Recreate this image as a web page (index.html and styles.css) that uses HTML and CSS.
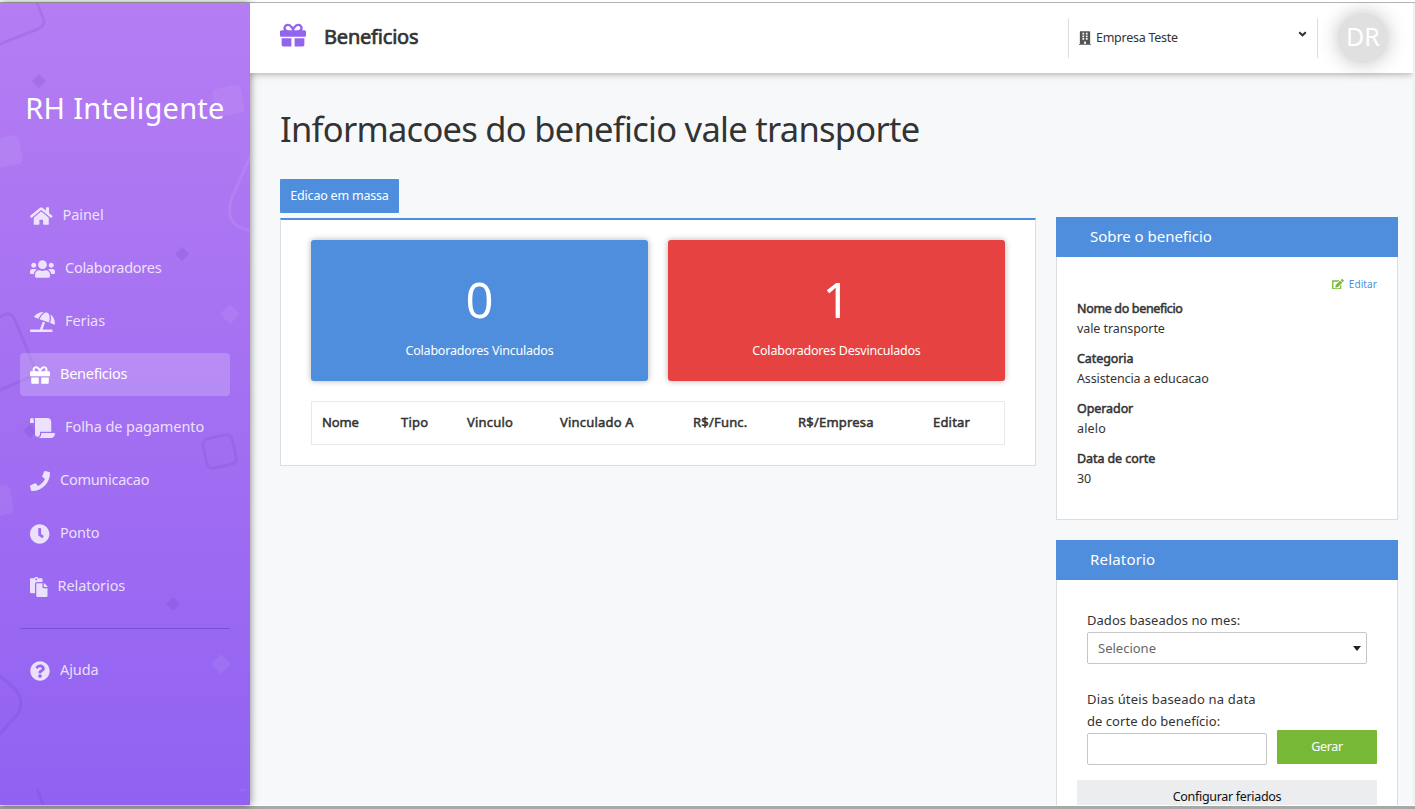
FILE: index.html
```html
<!DOCTYPE html>
<html lang="pt-BR">
<head>
<meta charset="utf-8">
<title>RH Inteligente - Beneficios</title>
<link rel="stylesheet" href="styles.css">
</head>
<body>
<svg class="defs" width="0" height="0" aria-hidden="true">
  <symbol id="gift" viewBox="0 0 512 512"><path d="M32 448c0 17.700 14.300 32 32 32h160V320H32v128zm256 32h160c17.700 0 32-14.300 32-32V320H288v160zm192-320h-42.100c6.200-12.100 10.100-25.500 10.100-40 0-48.500-39.500-88-88-88-41.600 0-68.500 21.300-103 68.300-34.500-47-61.400-68.300-103-68.300-48.500 0-88 39.500-88 88 0 14.500 3.800 27.900 10.100 40H32c-17.700 0-32 14.300-32 32v80c0 8.800 7.200 16 16 16h480c8.800 0 16-7.200 16-16v-80c0-17.700-14.300-32-32-32zm-326.100 0c-22.100 0-40-17.900-40-40s17.900-40 40-40c19.900 0 34.600 3.300 86.100 80h-86.100zm206.100 0h-86.100c51.400-76.500 65.700-80 86.100-80 22.100 0 40 17.900 40 40s-17.900 40-40 40z"/></symbol>
</svg>
<div class="frame">
  <aside class="sidebar">
    <svg class="pattern" width="250" height="802" viewBox="0 3 250 802" fill="none" aria-hidden="true">
      <g class="dark-line" stroke-width="3">
        <path d="M37 3L43.500 19Q45.500 26 38 29L-2 45"/>
        <path d="M-2 318L5 314.500Q11 312 14.500 319L33 364Q36 374 28 378L-2 391"/>
        <rect x="204.500" y="436.500" width="30" height="30" rx="6" transform="rotate(-12 219.500 451.500)"/>
        <path d="M-2 674L15 689Q25 701 18 714L-2 736"/>
        <path d="M37 789L43.500 806"/>
      </g>
      <path class="light-line" stroke-width="3" d="M253 150L231 200Q225 222 242 228L253 232"/>
      <g class="dark-fill">
        <path d="M39 74l7 7-7 7-7-7zM182 247l7 7-7 7-7-7zM30 424l7 7-7 7-7-7zM173 597l7 7-7 7-7-7z"/>
      </g>
      <g class="light-fill">
        <rect x="214" y="87" width="29" height="28" rx="5" transform="rotate(-11 228 101)"/>
        <rect x="-8" y="137" width="29" height="29" rx="5" transform="rotate(-11 6 151)"/>
        <rect x="-17" y="487" width="29" height="29" rx="5" transform="rotate(-11 -3 501)"/>
        <path d="M230 304l10 10-10 10-10-10zM221 654l10 10-10 10-10-10zM239 3h7l-3.500 3.500zM239 789h7l-3.500 3.500z"/>
      </g>
    </svg>
    <div class="brand">RH Inteligente</div>
    <nav class="nav">
      <a class="nav-item"><svg width="22.500" height="20" viewBox="0 0 576 512"><path d="M280.370 148.260L96 300.110V464a16 16 0 0 0 16 16l112.060-.29a16 16 0 0 0 15.920-16V368a16 16 0 0 1 16-16h64a16 16 0 0 1 16 16v95.640a16 16 0 0 0 16 16.050L464 480a16 16 0 0 0 16-16V300L295.670 148.260a12.190 12.190 0 0 0-15.300 0zM571.600 251.470L488 182.560V44.050a12 12 0 0 0-12-12h-56a12 12 0 0 0-12 12v72.610L318.470 43a48 48 0 0 0-61 0L4.340 251.470a12 12 0 0 0-1.600 16.900l25.500 31A12 12 0 0 0 45.150 301l235.220-193.740a12.190 12.190 0 0 1 15.300 0L530.900 301a12 12 0 0 0 16.900-1.600l25.500-31a12 12 0 0 0-1.700-16.930z"/></svg><span>Painel</span></a>
      <a class="nav-item tight"><svg width="25" height="20" viewBox="0 0 640 512"><path d="M96 224c35.300 0 64-28.700 64-64s-28.700-64-64-64-64 28.700-64 64 28.700 64 64 64zm448 0c35.300 0 64-28.700 64-64s-28.700-64-64-64-64 28.700-64 64 28.700 64 64 64zm32 32h-64c-17.600 0-33.500 7.100-45.100 18.600 40.300 22.100 68.900 62 75.100 109.400h66c17.700 0 32-14.300 32-32v-32c0-35.300-28.700-64-64-64zm-256 0c61.900 0 112-50.100 112-112S381.900 32 320 32 208 82.100 208 144s50.100 112 112 112zm76.800 32h-8.300c-20.800 10-43.900 16-68.500 16s-47.600-6-68.500-16h-8.300C179.600 288 128 339.600 128 403.200V432c0 26.500 21.500 48 48 48h288c26.500 0 48-21.500 48-48v-28.800c0-63.600-51.600-115.200-115.200-115.200zm-223.700-13.400C161.500 263.100 145.600 256 128 256H64c-35.300 0-64 28.700-64 64v32c0 17.700 14.300 32 32 32h65.900c6.300-47.400 34.900-87.300 75.200-109.400z"/></svg><span>Colaboradores</span></a>
      <a class="nav-item"><svg width="25" height="20" viewBox="0 0 640 512"><path d="M115.380 136.900l102.110 37.180c35.190-81.540 86.210-144.290 139-173.700-95.880-4.890-188.780 36.960-248.530 111.800-6.690 8.400-2.660 21.050 7.420 24.720zm132.250 48.160l238.480 86.830c35.760-121.380 18.700-231.660-42.630-253.980-7.400-2.700-15.130-4-23.090-4-58.020.01-128.270 69.170-172.760 171.150zM521.480 60.500c6.220 16.300 10.830 34.600 13.200 55.190 5.740 49.890-1.420 108.230-18.950 166.980l102.620 37.360c10.090 3.670 21.310-3.430 21.570-14.170 2.320-95.690-41.910-187.440-118.440-245.360zM560 447.980H321.060L386 269.500l-60.140-21.900-72.900 200.370H16c-8.840 0-16 7.160-16 16.010v32.010C0 504.830 7.160 512 16 512h544c8.840 0 16-7.170 16-16.010v-32.010c0-8.840-7.160-16-16-16z"/></svg><span>Ferias</span></a>
      <a class="nav-item tight active"><svg width="20" height="20"><use href="#gift"/></svg><span>Beneficios</span></a>
      <a class="nav-item"><svg width="25" height="20" viewBox="0 0 640 512"><path d="M48 0C21.530 0 0 21.530 0 48v64c0 8.840 7.160 16 16 16h80V48C96 21.530 74.470 0 48 0zm208 412.570V352h288V96c0-52.940-43.060-96-96-96H111.590C121.740 13.410 128 29.920 128 48v368c0 38.870 34.650 69.650 74.750 63.120C234.220 474 256 444.460 256 412.570zM288 384v32c0 52.930-43.060 96-96 96h336c61.860 0 112-50.140 112-112 0-8.840-7.160-16-16-16H288z"/></svg><span>Folha de pagamento</span></a>
      <a class="nav-item tight"><svg width="20" height="20" viewBox="0 0 512 512"><path d="M493.400 24.600l-104-24c-11.300-2.600-22.900 3.300-27.500 13.900l-48 112c-4.200 9.800-1.400 21.300 6.900 28l60.600 49.600c-36 76.700-98.900 140.500-177.200 177.200l-49.600-60.600c-6.800-8.300-18.200-11.100-28-6.900l-112 48C3.900 366.500-2 378.100.6 389.400l24 104C27.100 504.200 36.700 512 48 512c256.100 0 464-207.500 464-464 0-11.200-7.700-20.900-18.600-23.400z"/></svg><span>Comunicacao</span></a>
      <a class="nav-item tight"><svg width="20" height="20" viewBox="8 0 512 512"><path d="M256 8C119 8 8 119 8 256s111 248 248 248 248-111 248-248S393 8 256 8zm57.100 350.100L224.900 294c-3.100-2.300-4.900-5.900-4.900-9.700V116c0-6.600 5.400-12 12-12h48c6.600 0 12 5.400 12 12v137.700l63.500 46.200c5.400 3.900 6.500 11.400 2.600 16.800l-28.200 38.800c-3.900 5.300-11.400 6.500-16.800 2.600z"/></svg><span>Ponto</span></a>
      <a class="nav-item"><svg width="17.500" height="20" viewBox="0 0 448 512"><path d="M128 184c0-30.879 25.122-56 56-56h136V56c0-13.255-10.745-24-24-24h-80.610C204.306 12.890 183.637 0 160 0s-44.306 12.890-55.390 32H24C10.745 32 0 42.745 0 56v336c0 13.255 10.745 24 24 24h104V184zm32-144c13.255 0 24 10.745 24 24s-10.745 24-24 24-24-10.745-24-24 10.745-24 24-24zm184 248h104v200c0 13.255-10.745 24-24 24H184c-13.255 0-24-10.745-24-24V184c0-13.255 10.745-24 24-24h136v104c0 13.200 10.800 24 24 24zm104-38.059V256h-96v-96h6.059a24 24 0 0 1 16.970 7.029l65.941 65.941a24.002 24.002 0 0 1 7.030 16.971z"/></svg><span>Relatorios</span></a>
      <hr class="nav-rule">
      <a class="nav-item"><svg width="20" height="20" viewBox="0 0 512 512"><path d="M504 256c0 136.997-111.043 248-248 248S8 392.997 8 256C8 119.083 119.043 8 256 8s248 111.083 248 248zM262.655 90c-54.497 0-89.255 22.957-116.549 63.758-3.536 5.286-2.353 12.415 2.715 16.258l34.699 26.310c5.205 3.947 12.621 3.008 16.665-2.122 17.864-22.658 30.113-35.797 57.303-35.797 20.429 0 45.698 13.148 45.698 32.958 0 14.976-12.363 22.667-32.534 33.976C247.128 238.528 216 254.941 216 296v4c0 6.627 5.373 12 12 12h56c6.627 0 12-5.373 12-12v-1.333c0-28.462 83.186-29.647 83.186-106.667 0-58.002-60.165-102-116.531-102zM256 338c-25.365 0-46 20.635-46 46 0 25.364 20.635 46 46 46s46-20.636 46-46c0-25.365-20.635-46-46-46z"/></svg><span>Ajuda</span></a>
    </nav>
  </aside>
  <div class="page">
    <header class="topbar">
      <svg class="topbar-icon" width="26" height="26"><use href="#gift"/></svg>
      <h3 class="topbar-title">Beneficios</h3>
      <div class="company">
        <svg width="12" height="14" viewBox="0 0 448 512"><path fill-rule="evenodd" d="M436 480h-20V24c0-13-11-24-24-24H56C43 0 32 11 32 24v456H12c-7 0-12 5-12 12v20h448v-20c0-7-5-12-12-12zM128 64h64v64h-64zM128 160h64v64h-64zM128 256h64v64h-64zM256 64h64v64h-64zM256 160h64v64h-64zM256 256h64v64h-64zM192 384h64v96h-64z"/></svg>
        <span class="company-name">Empresa Teste</span>
        <svg class="chevron" width="9" height="6" viewBox="0 0 9 6"><path d="M1.200 1.200L4.500 4.300 7.800 1.200"/></svg>
      </div>
      <div class="avatar"><span>DR</span></div>
    </header>
    <main class="content">
      <h1 class="title">Informacoes do beneficio vale transporte</h1>
      <div class="columns">
        <section class="left">
          <button class="btn-mass">Edicao em massa</button>
          <div class="panel">
            <div class="stats">
              <div class="stat blue"><b>0</b><span>Colaboradores Vinculados</span></div>
              <div class="stat red"><b>1</b><span>Colaboradores Desvinculados</span></div>
            </div>
            <div class="thead">
              <span class="th snug">Nome</span><span class="th">Tipo</span><span class="th">Vinculo</span><span class="th">Vinculado A</span><span class="th">R$/Func.</span><span class="th">R$/Empresa</span><span class="th">Editar</span>
            </div>
          </div>
        </section>
        <aside class="right">
          <section class="box about">
            <h2 class="box-head">Sobre o beneficio</h2>
            <div class="box-body">
              <a class="edit"><svg width="12" height="10.500" viewBox="0 0 576 512"><path d="M402.600 83.200l90.200 90.200c3.800 3.800 3.800 10 0 13.800L274.400 405.600l-92.800 10.300c-12.400 1.400-22.900-9.100-21.500-21.500l10.300-92.800L388.800 83.200c3.800-3.800 10-3.800 13.800 0zm162-22.900l-48.800-48.800c-15.200-15.200-39.900-15.200-55.200 0l-35.400 35.400c-3.800 3.800-3.800 10 0 13.800l90.200 90.200c3.800 3.800 10 3.800 13.800 0l35.400-35.400c15.200-15.300 15.200-40 0-55.200zM384 346.200V448H64V128h229.800c3.200 0 6.200-1.300 8.500-3.500l40-40c7.600-7.600 2.200-20.500-8.500-20.500H48C21.500 64 0 85.500 0 112v352c0 26.500 21.500 48 48 48h352c26.500 0 48-21.500 48-48V306.200c0-10.700-12.900-16-20.500-8.500l-40 40c-2.200 2.300-3.500 5.300-3.500 8.500z"/></svg><span>Editar</span></a>
              <dl class="facts">
                <div><dt class="tight">Nome do beneficio</dt><dd>vale transporte</dd></div>
                <div><dt>Categoria</dt><dd class="snug">Assistencia a educacao</dd></div>
                <div><dt>Operador</dt><dd class="loose">alelo</dd></div>
                <div><dt>Data de corte</dt><dd>30</dd></div>
              </dl>
            </div>
          </section>
          <section class="box report">
            <h2 class="box-head loose">Relatorio</h2>
            <div class="form">
              <label class="label">Dados baseados no mes:</label>
              <div class="select"><span>Selecione</span><i class="caret"></i></div>
              <div class="row">
                <div class="days">
                  <label class="label"><span class="loose">Dias úteis baseado na data</span><br>de corte do benefício:</label>
                  <div class="input"></div>
                </div>
                <button class="btn-go">Gerar</button>
              </div>
              <button class="btn-config">Configurar feriados</button>
            </div>
          </section>
        </aside>
      </div>
    </main>
  </div>
</div>
</body>
</html>
```
FILE: styles.css
```css
* { box-sizing: border-box; }
body { margin: 0; height: 809px; padding-top: 2px; overflow: hidden; background: #fff; color: #333; font: 12px/20px "Noto Sans", "Open Sans", sans-serif; white-space: nowrap; }
h1, h2, h3, dl, dd, hr { margin: 0; font-weight: 400; }
svg { fill: currentColor; flex: none; }
button { border: 0; font: inherit; padding: 0; }
.defs { position: absolute; }
.frame { display: flex; height: 807px; border-top: 1px solid #b3b3b3; border-bottom: 3px solid #a8a8a8; }

/* Sidebar */
.sidebar { position: relative; z-index: 1; width: 250px; height: 802px; flex: none; color: #fff; background: linear-gradient(#b57df3, #9162f2); box-shadow: 0 0 8px rgba(0,0,0,.5); }
.pattern { position: absolute; left: 0; top: 0; fill: none; }
.dark-line { stroke: #5c3bb0; stroke-opacity: .14; }
.light-line { stroke: #fff; stroke-opacity: .08; }
.dark-fill { fill: #5c3bb0; fill-opacity: .16; }
.light-fill { fill: #fff; fill-opacity: .065; }
.brand { position: relative; height: 189px; padding-top: 85px; text-align: center; font-size: 29px; line-height: 40px; letter-spacing: .28px; }
.nav { position: relative; display: flex; flex-direction: column; gap: 10px; padding: 2px 20px 0; }
.nav-item { display: flex; align-items: center; gap: 10px; height: 43px; padding: 0 10px; border-radius: 4px; font-size: 14.5px; letter-spacing: -.08px; color: rgba(255,255,255,.8); }
.nav-item span { padding-bottom: 3px; }
.nav-item.tight { letter-spacing: -.27px; }
.nav-item.active { color: #fff; background: rgba(255,255,255,.2); }
.nav-rule { border: 0; height: 1px; margin: 10px 0; background: rgba(60,30,120,.3); }

/* Top bar */
.page { flex: 1; min-width: 0; height: 802px; background: #f7f8fa; overflow: hidden; border-right: 2px solid #f1f1f1; }
.topbar { position: relative; z-index: 2; display: flex; align-items: center; height: 70px; padding: 0 25px 0 30px; background: #fff; box-shadow: 0 0 8px rgba(0,0,0,.4); }
.topbar-icon { color: #9265f0; margin-top: -7px; }
.topbar-title { margin-left: 18px; flex: 1; padding-bottom: 2px; font-size: 20px; letter-spacing: -.2px; -webkit-text-stroke: .7px; }
.company { display: flex; align-items: center; width: 250px; height: 40px; padding: 0 10px; border: solid #ddd; border-width: 0 1px; font-size: 12.5px; letter-spacing: -.26px; }
.company svg { color: #555; }
.company-name { margin-left: 5px; flex: 1; }
.company .chevron { margin-top: -8px; }
.chevron path { fill: none; stroke: #333; stroke-width: 2; }
.avatar { display: flex; align-items: center; justify-content: center; width: 50px; height: 50px; margin-left: 20px; border-radius: 50%; background: #e0e0e0; color: #fff; font-size: 25px; box-shadow: 0 0 20px rgba(0,0,0,.25); }
.avatar span { padding-bottom: 4px; }

/* Content */
.content { padding: 36px 15px 0 30px; }
.title { font-size: 34.5px; line-height: 40px; letter-spacing: -.72px; }
.columns { display: flex; gap: 20px; }
.left { width: 756px; padding-top: 30px; }
.btn-mass { display: block; width: 119px; height: 34px; margin-bottom: 5px; border-radius: 1px; background: #4e8edd; color: #fff; font-size: 12.5px; letter-spacing: -.2px; }
.panel { height: 248px; padding: 20px 30px; background: #fff; border: 1px solid #dadde1; border-top: 2px solid #4e8edd; }
.stats { display: flex; gap: 20px; }
.stat { flex: 1; height: 141px; padding-top: 29px; text-align: center; color: #fff; border-radius: 3px; box-shadow: 0 0 6px rgba(0,0,0,.3); }
.stat b { display: block; font-size: 49px; line-height: 60px; font-weight: 400; }
.stat > span { display: inline-block; margin-top: 12px; font-size: 12.5px; letter-spacing: -.21px; }
.blue { background: #4e8edd; }
.red { background: #e64242; }
.thead { display: grid; grid-template-columns: 79px 66px 93px 133px 105px 135px 1fr; height: 44px; margin-top: 20px; border: 1px solid #e9e9e9; align-items: center; }
.th { padding: 0 0 2px 10px; font-size: 13px; letter-spacing: .2px; -webkit-text-stroke: .5px; }

/* Right column */
.right { width: 342px; padding-top: 68px; }
.box { background: #fff; border: 1px solid #dadde1; border-top: 0; margin-bottom: 20px; }
.box-head { height: 40px; margin: 0 -1px; padding-left: 34px; line-height: 39px; font-size: 15px; letter-spacing: -.03px; background: #4e8edd; color: #fff; }
.about { height: 303px; }
.box-body { padding: 17px 20px; }
.edit { display: flex; justify-content: flex-end; align-items: center; gap: 5px; font-size: 10px; letter-spacing: .1px; color: #4e8edd; }
.edit svg { color: #78b837; }
.facts { display: grid; gap: 10px; margin-top: 5px; font-size: 12.5px; letter-spacing: -.08px; }
.facts dt { -webkit-text-stroke: .5px; }
.facts .tight { letter-spacing: -.34px; }
.snug { letter-spacing: -.12px; }
.loose { letter-spacing: .18px; }
.report { height: 320px; }
.form { padding: 29px 20px 0; font-size: 13px; }
.label { display: block; padding-left: 10px; line-height: 22px; letter-spacing: .04px; }
.select { display: flex; align-items: center; justify-content: space-between; width: 280px; height: 32px; margin: 1px 0 0 10px; padding: 0 5px 0 10px; border: 1px solid #c6c6c6; border-radius: 2px; color: #666; }
.caret { border: 4px solid transparent; border-top: 5px solid #222; border-bottom: 0; }
.row { display: flex; gap: 10px; margin-top: 24px; align-items: flex-end; }
.days { width: 190px; }
.input { width: 180px; height: 32px; margin: 1px 0 0 10px; border: 1px solid #c6c6c6; border-radius: 2px; }
.btn-go { width: 100px; height: 34px; margin-bottom: 1px; border-radius: 1px; background: #78b837; color: #fff; font-size: 12.5px; letter-spacing: -.3px; }
.btn-config { display: block; width: 300px; height: 34px; margin-top: 15px; background: #ecedef; color: #111; font-size: 12.5px; letter-spacing: -.31px; }
```
